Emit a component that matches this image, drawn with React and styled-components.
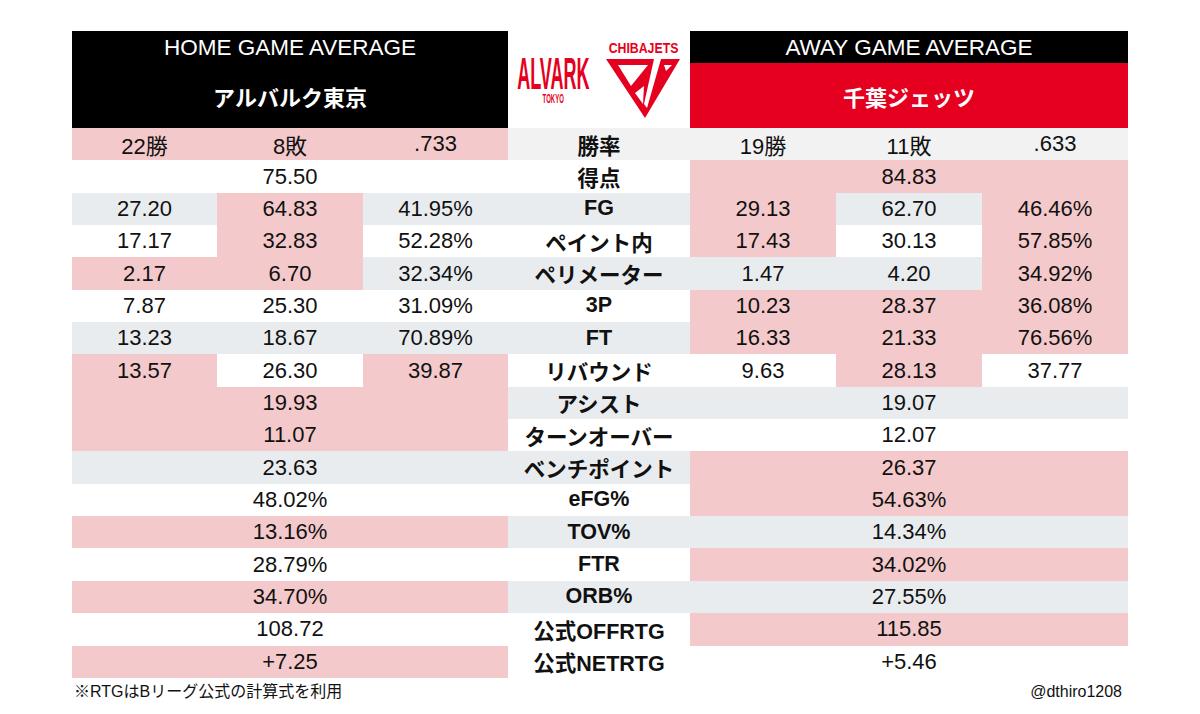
import React from "react";
import styled, { createGlobalStyle } from "styled-components";

const GlobalStyle = createGlobalStyle`
  html, body {
    margin: 0;
    padding: 0;
    background: #fff;
  }
  body {
    font-family: "Liberation Sans", "Noto Sans CJK JP", sans-serif;
    color: #111;
  }
`;

const RED = "#e60020";

const colors = {
  p: "#f4c9cb",
  g: "#e9ecef",
  l: "#f2f2f2",
  w: "#ffffff",
};

// each row: left side, label (mid colour), right side
const rows = [
  { l: [["22勝", "p"], ["8敗", "p"], [".733", "p"]], label: "勝率", m: "l", r: [["19勝", "l"], ["11敗", "l"], [".633", "l"]] },
  { l: ["75.50", "w"], label: "得点", m: "w", r: ["84.83", "p"] },
  { l: [["27.20", "g"], ["64.83", "p"], ["41.95%", "g"]], label: "FG", m: "g", r: [["29.13", "p"], ["62.70", "g"], ["46.46%", "p"]] },
  { l: [["17.17", "w"], ["32.83", "p"], ["52.28%", "w"]], label: "ペイント内", m: "w", r: [["17.43", "p"], ["30.13", "w"], ["57.85%", "p"]] },
  { l: [["2.17", "p"], ["6.70", "p"], ["32.34%", "g"]], label: "ペリメーター", m: "g", r: [["1.47", "g"], ["4.20", "g"], ["34.92%", "p"]] },
  { l: [["7.87", "w"], ["25.30", "w"], ["31.09%", "w"]], label: "3P", m: "w", r: [["10.23", "p"], ["28.37", "p"], ["36.08%", "p"]] },
  { l: [["13.23", "g"], ["18.67", "g"], ["70.89%", "g"]], label: "FT", m: "g", r: [["16.33", "p"], ["21.33", "p"], ["76.56%", "p"]] },
  { l: [["13.57", "p"], ["26.30", "w"], ["39.87", "p"]], label: "リバウンド", m: "w", r: [["9.63", "w"], ["28.13", "p"], ["37.77", "w"]] },
  { l: ["19.93", "p"], label: "アシスト", m: "g", r: ["19.07", "g"] },
  { l: ["11.07", "p"], label: "ターンオーバー", m: "w", r: ["12.07", "w"] },
  { l: ["23.63", "g"], label: "ベンチポイント", m: "g", r: ["26.37", "p"] },
  { l: ["48.02%", "w"], label: "eFG%", m: "w", r: ["54.63%", "p"] },
  { l: ["13.16%", "p"], label: "TOV%", m: "g", r: ["14.34%", "g"] },
  { l: ["28.79%", "w"], label: "FTR", m: "w", r: ["34.02%", "p"] },
  { l: ["34.70%", "p"], label: "ORB%", m: "g", r: ["27.55%", "g"] },
  { l: ["108.72", "w"], label: "公式OFFRTG", m: "w", r: ["115.85", "p"] },
  { l: ["+7.25", "p"], label: "公式NETRTG", m: "w", r: ["+5.46", "w"] },
];

const Page = styled.div`
  width: 1056px;
  padding: 31px 0 0 72px;
`;

const Header = styled.div`
  display: grid;
  grid-template-columns: 436px 182px 438px;
  height: 97px;
`;

const TeamHead = styled.div`
  display: flex;
  flex-direction: column;
`;

const Band = styled.div`
  display: flex;
  align-items: center;
  justify-content: center;
  color: #fff;
  background: ${(p) => (p.$red ? RED : "#000")};
  height: ${(p) => (p.$tall ? "65px" : "32px")};
  font-size: ${(p) => (p.$tall ? "22px" : "22.5px")};
  font-weight: ${(p) => (p.$tall ? 700 : 400)};
  padding-top: ${(p) => (p.$tall ? "0" : "2px")};
  box-sizing: border-box;
`;

const Logos = styled.div`
  display: flex;
  align-items: center;
  justify-content: space-between;
  padding: 0 10px 0 8px;
`;

const Alvark = styled.div`
  width: 74px;
  display: flex;
  flex-direction: column;
  align-items: center;
  gap: 4px;
  color: ${RED};
  font-weight: 700;
  margin-top: 2px;
`;

const Squeeze = styled.span`
  display: block;
  white-space: nowrap;
  font-size: ${(p) => p.$size}px;
  line-height: ${(p) => p.$lh}px;
  transform: scaleX(${(p) => p.$sx});
`;

const Chiba = styled.div`
  width: 74px;
  display: flex;
  flex-direction: column;
  align-items: center;
  color: ${RED};
  font-weight: 700;
  gap: 5px;
`;

const Table = styled.div`
  display: grid;
  grid-template-columns: 145px 146px 145px 182px 146px 146px 146px;
  grid-auto-rows: 32.35px;
`;

const Cell = styled.div`
  grid-column: span ${(p) => p.$span || 1};
  background: ${(p) => colors[p.$bg]};
  display: flex;
  align-items: center;
  justify-content: center;
  font-size: 22px;
  white-space: nowrap;
`;

const Label = styled(Cell)`
  font-size: 21.5px;
  font-weight: 700;
`;

const Footer = styled.div`
  display: flex;
  justify-content: space-between;
  padding: 4px 6px 0 2px;
  font-size: 16px;
  line-height: 20px;
  color: #111;
`;

function Side({ data }) {
  if (Array.isArray(data[0])) {
    return data.map(([v, c], i) => (
      <Cell key={i} $bg={c}>
        {v}
      </Cell>
    ));
  }
  return (
    <Cell $span={3} $bg={data[1]}>
      {data[0]}
    </Cell>
  );
}

function ChibaMark() {
  return (
    <svg width="74" height="59" viewBox="0 0 74 59">
      <path d="M0 0 H74 L39 59 Z" fill={RED} />
      <path d="M12 6 H42 L25 27 Z" fill="#fff" />
      <path d="M29 34 L38 27 L37 45 Z" fill="#fff" />
      <path d="M48 0 H55 L41 49 L38 45 Z" fill="#fff" />
      <path d="M58 6 H66 L60 12 Z" fill="#fff" />
    </svg>
  );
}

export default function App() {
  return (
    <>
      <GlobalStyle />
      <Page>
        <Header>
          <TeamHead>
            <Band>HOME GAME AVERAGE</Band>
            <Band $tall>アルバルク東京</Band>
          </TeamHead>
          <Logos>
            <Alvark>
              <Squeeze $size={44} $lh={32} $sx={0.41}>ALVARK</Squeeze>
              <Squeeze $size={12} $lh={10} $sx={0.5}>TOKYO</Squeeze>
            </Alvark>
            <Chiba>
              <Squeeze $size={15} $lh={13} $sx={0.82}>CHIBAJETS</Squeeze>
              <ChibaMark />
            </Chiba>
          </Logos>
          <TeamHead>
            <Band>AWAY GAME AVERAGE</Band>
            <Band $tall $red>千葉ジェッツ</Band>
          </TeamHead>
        </Header>
        <Table>
          {rows.map((row, i) => (
            <React.Fragment key={i}>
              <Side data={row.l} />
              <Label $bg={row.m}>{row.label}</Label>
              <Side data={row.r} />
            </React.Fragment>
          ))}
        </Table>
        <Footer>
          <span>※RTGはBリーグ公式の計算式を利用</span>
          <span>@dthiro1208</span>
        </Footer>
      </Page>
    </>
  );
}
